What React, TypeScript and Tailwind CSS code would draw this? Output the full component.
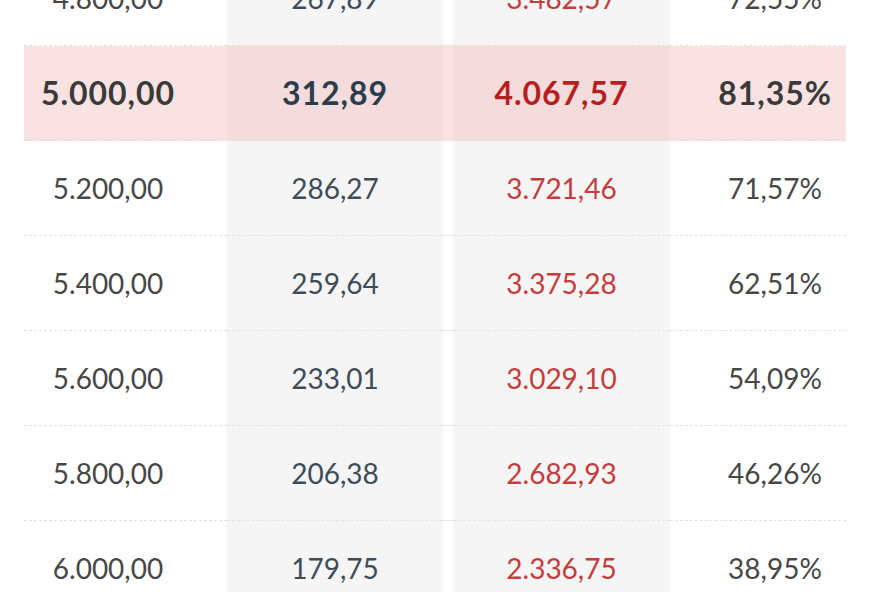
import React from 'react';

type Row = { salary: string; tax: string; net: string; pct: string; highlight?: boolean };

const rows: Row[] = [
  { salary: '4.800,00', tax: '267,89', net: '3.482,57', pct: '72,55%' },
  { salary: '5.000,00', tax: '312,89', net: '4.067,57', pct: '81,35%', highlight: true },
  { salary: '5.200,00', tax: '286,27', net: '3.721,46', pct: '71,57%' },
  { salary: '5.400,00', tax: '259,64', net: '3.375,28', pct: '62,51%' },
  { salary: '5.600,00', tax: '233,01', net: '3.029,10', pct: '54,09%' },
  { salary: '5.800,00', tax: '206,38', net: '2.682,93', pct: '46,26%' },
  { salary: '6.000,00', tax: '179,75', net: '2.336,75', pct: '38,95%' },
];

const TableRow = ({ row }: { row: Row }) => {
  const hl = row.highlight;
  // white cells vs. shaded columns, tinted pink on the highlighted row
  const plain = hl ? 'bg-[#f9e3e2]' : 'bg-white';
  const shaded = hl ? 'bg-[#f3dcdb]' : 'bg-[#f5f5f5]';
  const cell = 'h-[95px] flex items-center justify-center border-b border-dashed border-[#e3e3e3]';
  const text = hl
    ? 'text-[32px] font-bold tracking-[0.03em]'
    : 'text-[28px] font-normal';

  return (
    <div className="grid grid-cols-[203px_216px_10px_217px_176px] w-[822px] ml-6">
      <div className={`${cell} ${plain} pr-[35px] ${text} ${hl ? 'text-[#3a3a3a]' : 'text-[#474747]'}`}>
        {row.salary}
      </div>
      <div className={`${cell} ${shaded} ${text} ${hl ? 'text-[#2b3d4c]' : 'text-[#3d4c58]'}`}>
        {row.tax}
      </div>
      <div className={`${cell} ${plain}`} />
      <div className={`${cell} ${shaded} ${text} ${hl ? 'text-[#b71f1f]' : 'text-[#c43c3c]'}`}>
        {row.net}
      </div>
      <div className={`${cell} ${plain} pl-[34px] ${text} ${hl ? 'text-[#3a3a3a]' : 'text-[#474747]'}`}>
        {row.pct}
      </div>
    </div>
  );
};

export default function App() {
  return (
    <div className="w-[880px] h-[592px] overflow-hidden bg-white" style={{ fontFamily: 'Lato, "Open Sans", sans-serif' }}>
      <div className="-mt-[49px]">
        {rows.map((r) => (
          <TableRow key={r.salary} row={r} />
        ))}
      </div>
    </div>
  );
}
